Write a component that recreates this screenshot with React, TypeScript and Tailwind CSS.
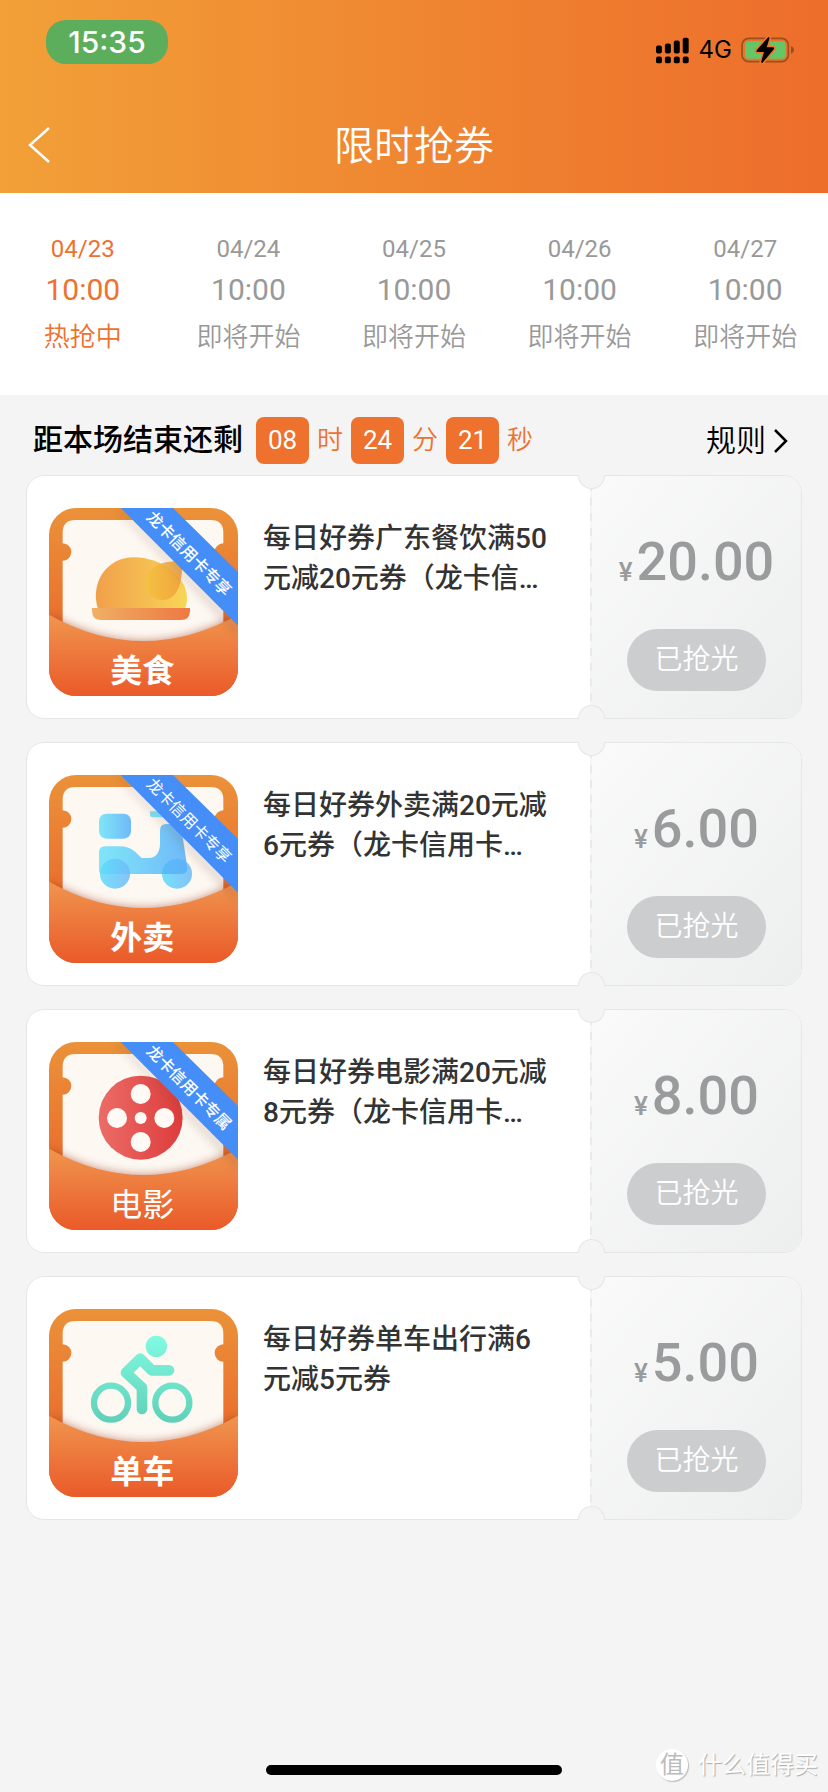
import type { ReactNode } from 'react';
import clsx from 'clsx';

const sessions = [
	{ date: '04/23', time: '10:00', label: '热抢中', active: true },
	{ date: '04/24', time: '10:00', label: '即将开始', active: false },
	{ date: '04/25', time: '10:00', label: '即将开始', active: false },
	{ date: '04/26', time: '10:00', label: '即将开始', active: false },
	{ date: '04/27', time: '10:00', label: '即将开始', active: false },
];

type Coupon = {
	id: string;
	name: string;
	nameClass: string;
	ribbon?: string;
	ribbonClass?: string;
	title: string;
	price: string;
	art: ReactNode;
};

const coupons: Coupon[] = [
	{
		id: 'food',
		name: '美食',
		nameClass: 'font-bold',
		ribbon: '龙卡信用卡专享',
		ribbonClass: 'font-medium',
		title: '每日好券广东餐饮满50元减20元券（龙卡信…',
		price: '20.00',
		art: <FoodArt />,
	},
	{
		id: 'takeout',
		name: '外卖',
		nameClass: 'font-bold',
		ribbon: '龙卡信用卡专享',
		ribbonClass: 'font-normal',
		title: '每日好券外卖满20元减6元券（龙卡信用卡…',
		price: '6.00',
		art: <ScooterArt />,
	},
	{
		id: 'movie',
		name: '电影',
		nameClass: 'font-normal',
		ribbon: '龙卡信用卡专属',
		ribbonClass: 'font-medium',
		title: '每日好券电影满20元减8元券（龙卡信用卡…',
		price: '8.00',
		art: <FilmArt />,
	},
	{
		id: 'bike',
		name: '单车',
		nameClass: 'font-bold',
		title: '每日好券单车出行满6元减5元券',
		price: '5.00',
		art: <BikeArt />,
	},
];

function FoodArt() {
	return (
		<g>
			<defs>
				<linearGradient id="dome">
					<stop stopColor="#f19f4a" />
					<stop offset="1" stopColor="#f8d657" />
				</linearGradient>
				<linearGradient id="leg">
					<stop stopColor="#f4c23f" />
					<stop offset="1" stopColor="#f09d38" />
				</linearGradient>
				<linearGradient id="plate">
					<stop stopColor="#efb064" />
					<stop offset="1" stopColor="#ee7843" />
				</linearGradient>
			</defs>
			<path d="M146 300C124 228 170 148 255 148C335 148 414 205 414 270Q414 290 408 300Z"
				fill="url(#dome)" />
			<path d="M399 160C402 225 385 276 340 276C308 276 289 250 289 224C289 182 330 156 399 160Z"
				fill="url(#leg)"
				opacity=".85" />
			<path d="M129 300H423V308Q423 336 395 336H157Q129 336 129 308Z"
				fill="url(#plate)" />
		</g>
	);
}

function ScooterArt() {
	return (
		<g>
			<defs>
				<linearGradient id="sky">
					<stop stopColor="#80e6f9" />
					<stop offset="1" stopColor="#6fb9f8" />
				</linearGradient>
				<linearGradient id="wheel">
					<stop stopColor="#5cdcfa" />
					<stop offset="1" stopColor="#6fb9f8" />
				</linearGradient>
			</defs>
			<rect x="150"
				y="116"
				width="96"
				height="75"
				rx="22"
				fill="url(#sky)" />
			<path d="M303 109H363V127H315Q303 127 303 119Z"
				fill="#7fe3f5" />
			<path d="M150 232Q150 214 168 214H212C250 214 262 236 278 249H298C322 249 333 232 333 205V166Q333 147 352 147H382Q395 147 398 165L415 278Q415 297 396 297H160Q150 297 150 285Z"
				fill="url(#sky)" />
			<circle cx="198"
				cy="296"
				r="45"
				fill="url(#wheel)"
				opacity=".85" />
			<circle cx="384"
				cy="296"
				r="45"
				fill="url(#wheel)"
				opacity=".85" />
			<path d="M341 283Q352 251 384 251Q398 251 411 259L415 278Q415 297 396 297H339Z"
				fill="#5aaef8"
				opacity=".7" />
		</g>
	);
}

function FilmArt() {
	return (
		<g>
			<defs>
				<linearGradient id="reel">
					<stop stopColor="#ec6c68" />
					<stop offset="1" stopColor="#dd3c3c" />
				</linearGradient>
			</defs>
			<circle cx="275" cy="227" r="126" fill="url(#reel)" />
			<g fill="#fffaf5">
				<circle cx="275" cy="156" r="30" />
				<circle cx="275" cy="300" r="30" />
				<circle cx="204" cy="228" r="30" />
				<circle cx="346" cy="228" r="30" />
				<circle cx="275" cy="228" r="18" />
			</g>
		</g>
	);
}

function BikeArt() {
	return (
		<g>
			<defs>
				<linearGradient id="mint"
					gradientUnits="userSpaceOnUse"
					x1="0"
					y1="80"
					x2="0"
					y2="342">
					<stop stopColor="#80fbe2" />
					<stop offset="1" stopColor="#5fd0b7" />
				</linearGradient>
			</defs>
			<circle cx="322" cy="112" r="32" fill="url(#mint)" />
			<g fill="none"
				stroke="url(#mint)"
				strokeLinecap="round"
				strokeLinejoin="round">
				<circle cx="186" cy="281" r="51" strokeWidth="19" />
				<circle cx="370" cy="281" r="51" strokeWidth="19" />
				<path d="M360 184H308L274 149L231 191L279 236V300" strokeWidth="32" />
			</g>
		</g>
	);
}

function CouponIcon({ coupon }: { coupon: Coupon }) {
	const { id, name, nameClass, ribbon, ribbonClass, art } = coupon;

	return (
		<svg viewBox="0 0 567 564"
			role="img"
			aria-label={name}
			className="h-[188px] w-[189px] shrink-0 rounded-[27px]">
			<defs>
				<linearGradient id={`${id}-back`} x2="0" y2="1">
					<stop stopColor="#ea9239" />
					<stop offset=".6" stopColor="#ea702e" />
				</linearGradient>
				<linearGradient id={`${id}-front`} x2="0" y2="1">
					<stop stopColor="#f0954e" />
					<stop offset="1" stopColor="#ea5a29" />
				</linearGradient>
				<filter id={`${id}-blur`}
					x="-20%"
					y="-20%"
					width="140%"
					height="140%">
					<feGaussianBlur stdDeviation="14" />
				</filter>
			</defs>
			<rect width="567" height="564" fill={`url(#${id}-back)`} />
			<path d="M79 36H485Q523 36 523 74V106A26 26 0 0 0 523 158V500H41V158A26 26 0 0 0 41 106V74Q41 36 79 36Z"
				fill="#fdf8f2" />
			{art}
			<path d="M0 320Q283 478 567 320V564H0Z"
				fill="#a03c20"
				opacity=".6"
				filter={`url(#${id}-blur)`} />
			<path d="M0 320Q283 478 567 320V564H0Z" fill={`url(#${id}-front)`} />
			<text x="280"
				y="523"
				textAnchor="middle"
				fill="#fff"
				className={clsx('text-[96px]', nameClass)}>
				{name}
			</text>
			{ribbon && (
				<g>
					<path d="M215 0L567 353V380L200 0Z"
						fill="#7a4a30"
						opacity=".25"
						filter={`url(#${id}-blur)`} />
					<path d="M215 0H372L567 192V353Z" fill="#458ef8" />
					<text x="421"
						y="154"
						textAnchor="middle"
						fill="#fff"
						transform="rotate(45 421 136)"
						className={clsx('text-[48px]', ribbonClass)}>
						{ribbon}
					</text>
				</g>
			)}
		</svg>
	);
}

function CouponCard({ coupon }: { coupon: Coupon }) {
	return (
		<li className="relative flex rounded-[18px] border border-[#e5e6e6] bg-white">
			<div className="flex flex-1 gap-[25px] pt-8 pb-[22px] pl-[22px]">
				<CouponIcon coupon={coupon} />
				<h2 className="w-[290px] pt-[11px] text-[28px] leading-[40px] font-medium text-[#333]">
					{coupon.title}
				</h2>
			</div>
			<div className="w-[2px] bg-[repeating-linear-gradient(to_bottom,#f4f5f5_0_7px,#e9eaea_7px_15px)]" />
			<div className="flex w-[209px] flex-col items-center rounded-r-[17px] bg-linear-to-br from-[#f9faf9] to-[#edefee] pt-14">
				<p className="flex h-[60px] items-end gap-1 text-[54px] leading-[60px] font-medium text-[#9a9b9d]">
					<span className="text-[26px] leading-[40px]">¥</span>
					{coupon.price}
				</p>
				<button type="button"
					disabled
					className="mt-[37px] h-[62px] w-[139px] rounded-full bg-[#cccdcf] text-[28px] font-[350] text-white">
					已抢光
				</button>
			</div>

			{/* Ticket notches */}
			<span className="absolute -top-px right-[196px] h-[14px] w-[27px] rounded-b-full border border-t-0 border-[#e5e6e6] bg-[#f4f4f4]" />
			<span className="absolute right-[196px] -bottom-px h-[14px] w-[27px] rounded-t-full border border-b-0 border-[#e5e6e6] bg-[#f4f4f4]" />
		</li>
	);
}

function StatusIcons() {
	return (
		<div className="flex h-[28px] items-center text-black">
			<svg viewBox="0 0 100 80" className="h-[27px] w-[33px]">
				<rect x="0" y="25" width="18" height="24" rx="6" />
				<rect x="27" y="19" width="18" height="30" rx="6" />
				<rect x="54" y="10" width="18" height="39" rx="6" />
				<rect x="81" y="1" width="18" height="48" rx="6" />
				<rect x="0" y="58" width="18" height="21" rx="6" />
				<rect x="27" y="58" width="18" height="21" rx="6" />
				<rect x="54" y="58" width="18" height="21" rx="6" />
				<rect x="81" y="58" width="18" height="21" rx="6" />
			</svg>
			<span className="ml-[10px] font-['Inter'] text-[24px] leading-[28px]">4G</span>
			<svg viewBox="0 0 159 84" className="ml-[9px] h-[28px] w-[53px]">
				<rect x="3" y="7" width="139" height="70" rx="20" fill="none" stroke="#98501f" strokeWidth="5" />
				<path d="M150 31Q159 34 159 42Q159 50 150 53Z" fill="#98501f" />
				<rect x="12" y="16" width="122" height="52" rx="11" fill="#66c566" />
				<path d="M82 3L47 43Q45 48 50 48H69L60 79L64 81L99 39Q100 34 96 34H77L86 5Z"
					fill="#000"
					stroke="#ee772f"
					strokeWidth="10"
					strokeLinejoin="round"
					paintOrder="stroke" />
			</svg>
		</div>
	);
}

function TimeBox({ value, unit }: { value: string; unit: string }) {
	return (
		<>
			<span className="flex h-[47px] w-[53px] items-center justify-center rounded-lg bg-[#ee712d] text-white">
				{value}
			</span>
			<span className="font-[350] text-[#ee712d]">{unit}</span>
		</>
	);
}

export default function App() {
	return (
		<div lang="zh-CN"
			className="flex min-h-screen flex-col bg-[#f4f4f4] font-['Roboto','Noto_Sans_CJK_SC',sans-serif]">
			<header className="bg-linear-to-r from-[#f2a038] via-[#ef8631] to-[#ed6d2b]">
				<div className="flex h-[97px] items-start justify-between pt-5 pr-[34px] pl-[46px]">
					<span className="flex h-[44px] w-[122px] items-center justify-center rounded-[20px] bg-[#5cae5c] font-['Inter'] text-[30px] font-medium text-white">
						15:35
					</span>
					<div className="pt-4">
						<StatusIcons />
					</div>
				</div>
				<div className="grid h-[96px] grid-cols-[1fr_auto_1fr] items-center">
					<button type="button"
						aria-label="返回"
						className="justify-self-start pl-7">
						<svg viewBox="0 0 24 38"
							className="h-[38px] w-[24px]"
							fill="none"
							stroke="#fff"
							strokeWidth="2.5">
							<path d="M21 2L2 19L21 36" />
						</svg>
					</button>
					<h1 className="pt-1 text-[40px] font-[350] text-white">限时抢券</h1>
				</div>
			</header>

			<nav className="grid grid-cols-5 bg-white pt-[40px] pb-[36px]">
				{sessions.map((session) => (
					<button key={session.date}
						type="button"
						className={clsx(
							'flex flex-col items-center',
							session.active ? 'text-[#ee712d]' : 'text-[#999]',
						)}>
						<span className="text-[24px] leading-[32px]">{session.date}</span>
						<span className="text-[30px] leading-[50px]">{session.time}</span>
						<span className="text-[26px] leading-[44px] font-[350]">{session.label}</span>
					</button>
				))}
			</nav>

			<main>
				<div className="flex items-center justify-between pt-[22px] pr-[40px] pb-[11px] pl-[33px]">
					<div className="flex items-center gap-2 text-[26px]">
						<span className="mr-[5px] pb-[2px] text-[30px] font-medium text-black">距本场结束还剩</span>
						<TimeBox value="08" unit="时" />
						<TimeBox value="24" unit="分" />
						<TimeBox value="21" unit="秒" />
					</div>
					<button type="button"
						className="flex items-center gap-[8px] text-[30px] leading-[40px] font-[350] text-black">
						规则
						<svg viewBox="0 0 14 24"
							className="h-[24px] w-[14px]"
							fill="none"
							stroke="currentColor"
							strokeWidth="2.5">
							<path d="M1 1L12 12L1 23" />
						</svg>
					</button>
				</div>

				<ul className="flex flex-col gap-[23px] px-[26px]">
					{coupons.map((coupon) => (
						<CouponCard key={coupon.id} coupon={coupon} />
					))}
				</ul>
			</main>

			<footer className="mt-auto grid grid-cols-[1fr_296px_1fr] items-center pb-[10px]">
				<div className="col-start-2 mt-[10px] h-[10px] rounded-full bg-black" />
				<div className="flex items-center gap-[10px] justify-self-end pr-[10px] text-white">
					<span className="flex size-[32px] items-center justify-center rounded-full bg-white text-[24px] leading-none text-[#bbb] shadow-[1px_1px_1px_#bbb]">
						值
					</span>
					<span className="text-[24px] leading-[34px] [text-shadow:1px_1px_1px_#aaa]">什么值得买</span>
				</div>
			</footer>
		</div>
	);
}
